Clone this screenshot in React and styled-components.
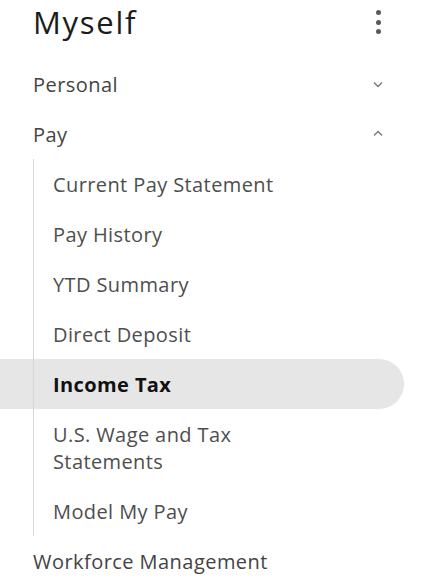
import React from "react";
import styled, { createGlobalStyle } from "styled-components";

const Global = createGlobalStyle`
  html, body { margin: 0; padding: 0; background: #ffffff; }
  body { font-family: "Open Sans", "Noto Sans", sans-serif; }
`;

const Panel = styled.nav`
  width: 427px;
  display: flex;
  flex-direction: column;
`;

const Header = styled.header`
  height: 59px;
  display: flex;
  align-items: flex-start;
  justify-content: space-between;
  padding: 0 0 0 33px;
  box-sizing: border-box;
`;

const Title = styled.h1`
  margin: 0;
  font-size: 31px;
  line-height: 44px;
  font-weight: 400;
  color: #1c1c1c;
  letter-spacing: 1.7px;
`;

const Kebab = styled.button`
  width: 30px;
  height: 44px;
  margin-right: 34px;
  border: 0;
  background: none;
  padding: 0;
  display: flex;
  flex-direction: column;
  align-items: center;
  justify-content: center;
  gap: 4.5px;
  span {
    width: 5px;
    height: 5px;
    border-radius: 50%;
    background: #5a5a5a;
  }
`;

const Section = styled.div`
  height: 50px;
  display: flex;
  align-items: center;
  justify-content: space-between;
  padding: 0 44px 0 33px;
  font-size: 20px;
  letter-spacing: 0.45px;
  color: #444444;
`;

const Chevron = styled.svg`
  width: 10px;
  height: 7px;
  transform: ${(p) => (p.$up ? "rotate(180deg)" : "none")};
  margin-top: ${(p) => (p.$up ? "-2px" : "0")};
`;

const SubList = styled.ul`
  list-style: none;
  margin: 0;
  padding: 0;
`;

const SubItem = styled.li`
  width: 404px;
  box-sizing: border-box;
  padding: 11.5px 0 11.5px 53px;
  line-height: 27px;
  font-size: 20px;
  letter-spacing: 0.4px;
  color: ${(p) => (p.$active ? "#111111" : "#4e4e4e")};
  font-weight: ${(p) => (p.$active ? 700 : 400)};
  border-radius: 0 25px 25px 0;
  background:
    linear-gradient(#d3d9d3, #d3d9d3) 33px 0 / 1px 100% no-repeat,
    ${(p) => (p.$active ? "#e6e6e6" : "transparent")};
`;

const Label = styled.span`
  display: block;
  max-width: 260px;
`;

const ChevronIcon = ({ up }) => (
  <Chevron $up={up} viewBox="0 0 10 7">
    <path d="M1 1.5 L5 5.5 L9 1.5" fill="none" stroke="#777" strokeWidth="1.4" />
  </Chevron>
);

const items = [
  "Current Pay Statement",
  "Pay History",
  "YTD Summary",
  "Direct Deposit",
  "Income Tax",
  "U.S. Wage and Tax Statements",
  "Model My Pay",
];

export default function App() {
  return (
    <>
      <Global />
      <Panel>
        <Header>
          <Title>Myself</Title>
          <Kebab aria-label="More">
            <span />
            <span />
            <span />
          </Kebab>
        </Header>
        <Section>
          Personal
          <ChevronIcon />
        </Section>
        <Section>
          Pay
          <ChevronIcon up />
        </Section>
        <SubList>
          {items.map((t) => (
            <SubItem key={t} $active={t === "Income Tax"}>
              <Label>{t}</Label>
            </SubItem>
          ))}
        </SubList>
        <Section>Workforce Management</Section>
      </Panel>
    </>
  );
}
